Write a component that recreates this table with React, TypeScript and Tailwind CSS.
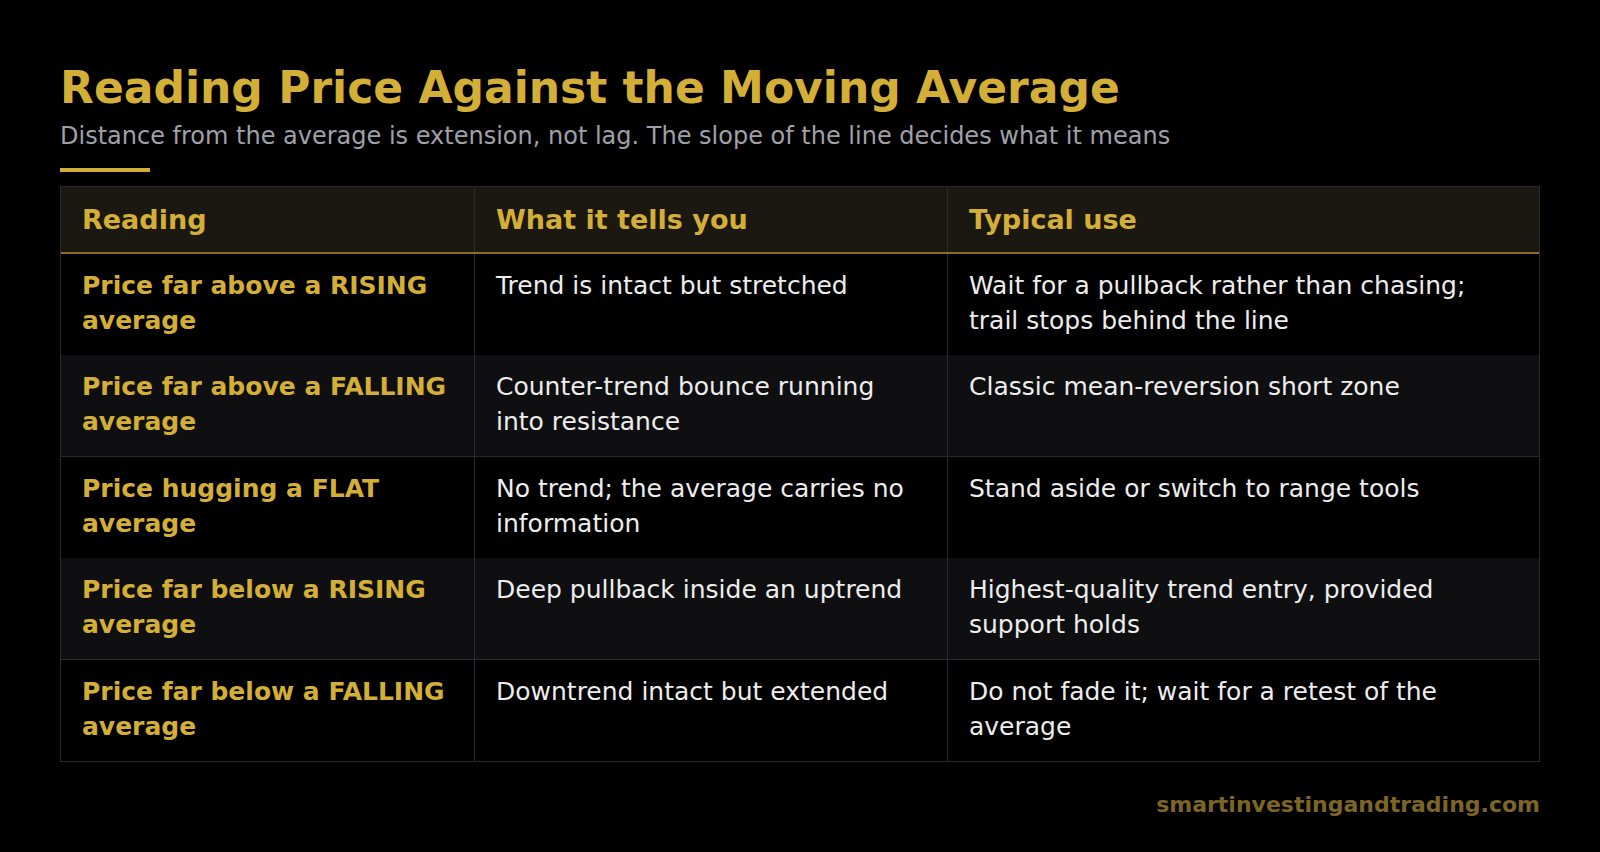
import * as React from 'react';

const rows = [
  {
    reading: 'Price far above a RISING average',
    tells: 'Trend is intact but stretched',
    use: 'Wait for a pullback rather than chasing; trail stops behind the line',
  },
  {
    reading: 'Price far above a FALLING average',
    tells: 'Counter-trend bounce running into resistance',
    use: 'Classic mean-reversion short zone',
  },
  {
    reading: 'Price hugging a FLAT average',
    tells: 'No trend; the average carries no information',
    use: 'Stand aside or switch to range tools',
  },
  {
    reading: 'Price far below a RISING average',
    tells: 'Deep pullback inside an uptrend',
    use: 'Highest-quality trend entry, provided support holds',
  },
  {
    reading: 'Price far below a FALLING average',
    tells: 'Downtrend intact but extended',
    use: 'Do not fade it; wait for a retest of the average',
  },
];

export default function App() {
  return (
    <div className="w-[1600px] h-[852px] overflow-hidden bg-black px-[60px] pt-[60px] font-['DejaVu_Sans',sans-serif]">
      <h1 className="text-[44px] leading-[56px] font-bold text-[#d4af37]">
        Reading Price Against the Moving Average
      </h1>
      <p className="mt-[5px] text-[24px] leading-[30px] text-[#a0a0a8]">
        Distance from the average is extension, not lag. The slope of the line decides what it means
      </p>
      <div className="mt-[17px] h-[4px] w-[90px] bg-[#d4af37]" />

      <div className="mt-[14px] w-[1480px] border border-[#2a2a2c]">
        <div className="grid grid-cols-[413px_473px_1fr] border-b-2 border-[#8a6d24] bg-[#1b1812] text-[27px] leading-[35px] font-bold text-[#d4af37]">
          <div className="px-[21px] py-[15px]">Reading</div>
          <div className="border-l border-[#2a2a2c] px-[21px] py-[15px]">What it tells you</div>
          <div className="border-l border-[#2a2a2c] px-[21px] py-[15px]">Typical use</div>
        </div>
        {rows.map((r, i) => (
          <div
            key={r.reading}
            className={`grid grid-cols-[413px_473px_1fr] text-[25px] leading-[35px] ${
              i % 2 === 1 ? 'bg-[#0f0f11] border-b border-[#2a2a2c]' : 'bg-black'
            }`}
          >
            <div className="px-[21px] pt-[14px] pb-[17px] font-bold text-[#d4af37]">{r.reading}</div>
            <div className="border-l border-[#2a2a2c] px-[21px] pt-[14px] pb-[17px] text-[#ededed]">{r.tells}</div>
            <div className="border-l border-[#2a2a2c] px-[21px] pt-[14px] pb-[17px] text-[#ededed]">{r.use}</div>
          </div>
        ))}
      </div>

      <div className="mt-[29px] w-[1480px] text-right text-[22px] leading-[28px] font-bold text-[#7d6526]">
        smartinvestingandtrading.com
      </div>
    </div>
  );
}
